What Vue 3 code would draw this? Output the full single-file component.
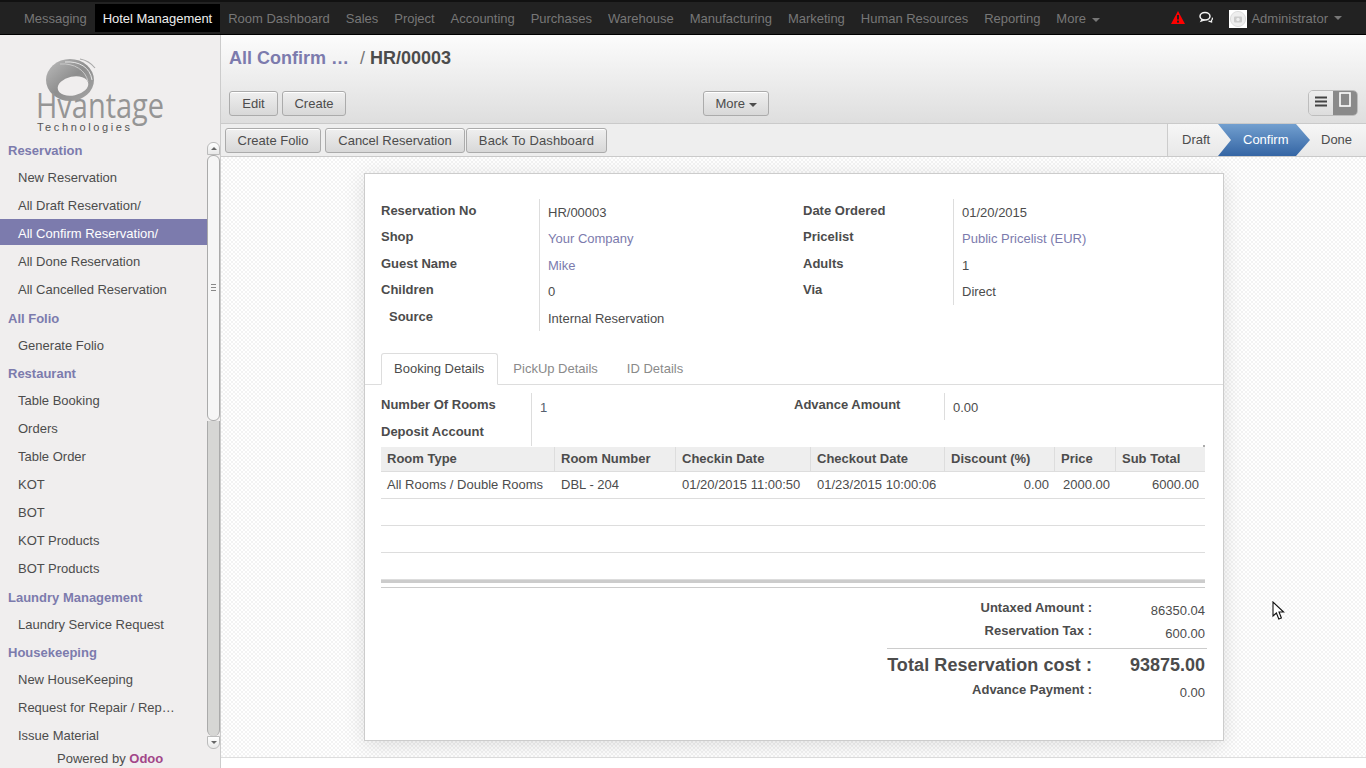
<script setup>
const navItems = ['Room Dashboard','Sales','Project','Accounting','Purchases','Warehouse','Manufacturing','Marketing','Human Resources','Reporting']
const menu = [
  { title: 'Reservation', items: ['New Reservation','All Draft Reservation/','All Confirm Reservation/','All Done Reservation','All Cancelled Reservation'] },
  { title: 'All Folio', items: ['Generate Folio'] },
  { title: 'Restaurant', items: ['Table Booking','Orders','Table Order','KOT','BOT','KOT Products','BOT Products'] },
  { title: 'Laundry Management', items: ['Laundry Service Request'] },
  { title: 'Housekeeping', items: ['New HouseKeeping','Request for Repair / Rep…','Issue Material'] },
]
const active = 'All Confirm Reservation/'
const leftFields = [
  { label: 'Reservation No', value: 'HR/00003' },
  { label: 'Shop', value: 'Your Company', link: true },
  { label: 'Guest Name', value: 'Mike', link: true },
  { label: 'Children', value: '0' },
  { label: 'Source', value: 'Internal Reservation', indent: true },
]
const rightFields = [
  { label: 'Date Ordered', value: '01/20/2015' },
  { label: 'Pricelist', value: 'Public Pricelist (EUR)', link: true },
  { label: 'Adults', value: '1' },
  { label: 'Via', value: 'Direct' },
]
const totals = [
  { label: 'Untaxed Amount :', value: '86350.04' },
  { label: 'Reservation Tax :', value: '600.00' },
]
const columns = [
  { name: 'Room Type', width: 174 },
  { name: 'Room Number', width: 121 },
  { name: 'Checkin Date', width: 135 },
  { name: 'Checkout Date', width: 134 },
  { name: 'Discount (%)', width: 110 },
  { name: 'Price', width: 61 },
  { name: 'Sub Total', width: 89 },
]
</script>

<template>
  <div class="app">
    <nav class="topbar">
      <ul class="navlist">
        <li class="navitem">Messaging</li>
        <li class="navitem current">Hotel Management</li>
        <li v-for="n in navItems" :key="n" class="navitem">{{ n }}</li>
        <li class="navitem">More <span class="caret nav-caret"></span></li>
      </ul>
      <div class="nav-right">
        <svg class="alert" width="14" height="13" viewBox="0 0 14 13">
          <path d="M7 0 L14 13 L0 13 Z" fill="#f00" />
          <rect x="6" y="4" width="2" height="4.5" fill="#222" />
          <rect x="6" y="9.6" width="2" height="2" fill="#222" />
        </svg>
        <svg class="chat" width="14" height="13" viewBox="0 0 14 13" fill="none">
          <path d="M9.5 10.2 C11 10.4 12.6 11 13 11.4 C12.6 10.6 12.4 10 12.5 9.4 C13.4 8.6 13.6 7.6 13.2 6.6" stroke="#eee" stroke-width="1.2" />
          <ellipse cx="6" cy="5.2" rx="5" ry="3.8" stroke="#f4f4f4" stroke-width="1.5" />
          <path d="M3.2 8 L2 10.2 L5.6 9" stroke="#f4f4f4" stroke-width="1.2" />
        </svg>
        <span class="avatar">
          <svg width="18" height="18" viewBox="0 0 18 18">
            <circle cx="9" cy="9" r="7.6" fill="#eee" stroke="#ddd" />
            <rect x="5" y="6.5" width="8" height="6" rx="1" fill="#ccc" />
            <circle cx="9" cy="9.5" r="1.7" fill="#eee" />
          </svg>
        </span>
        <span class="admin">Administrator</span>
        <span class="caret nav-caret admin-caret"></span>
      </div>
    </nav>

    <div class="body">
      <aside class="sidebar">
        <div class="logo">
          <svg width="130" height="76" viewBox="0 0 130 76">
            <defs>
              <linearGradient id="swirl" x1="0" y1="0" x2="1" y2="1">
                <stop offset="0" stop-color="#bdbdbd" />
                <stop offset="0.5" stop-color="#8e8e8e" />
                <stop offset="1" stop-color="#a5a5a5" />
              </linearGradient>
            </defs>
            <ellipse cx="34" cy="22" rx="24" ry="21" fill="url(#swirl)" />
            <ellipse cx="37" cy="28" rx="15.5" ry="9.5" transform="rotate(-12 37 28)" fill="#f0eeee" />
            <path d="M29 4 C43 3 54 9 56 22" fill="none" stroke="#e6e6e6" stroke-width="1" />
            <path d="M24 6 C38 5 50 12 52 24" fill="none" stroke="#c9c9c9" stroke-width="1" />
            <path d="M44 1 C50 2 55 5 59 10" fill="none" stroke="#a8a8a8" stroke-width="1.2" />
            <text class="logo-name" x="0" y="60" textLength="128" lengthAdjust="spacingAndGlyphs">Hvantage</text>
            <text class="logo-sub" x="1" y="73" textLength="93">Technologies</text>
          </svg>
        </div>
        <div class="menu-wrap">
          <div class="menu">
            <template v-for="g in menu" :key="g.title">
              <div class="menu-head">{{ g.title }}</div>
              <div v-for="i in g.items" :key="i" class="menu-item" :class="{ selected: i === active }">{{ i }}</div>
            </template>
          </div>
          <div class="scrollbar">
            <div class="sb-btn sb-top"><span class="sb-up"></span></div>
            <div class="sb-thumb"><span class="sb-grip"></span></div>
            <div class="sb-track"></div>
            <div class="sb-btn sb-bottom"><span class="sb-down"></span></div>
          </div>
        </div>
        <div class="powered">Powered by <b>Odoo</b></div>
      </aside>

      <main class="main">
        <header class="head">
          <h2 class="crumbs"><a>All Confirm …</a><span class="sep"> / </span><span class="cur">HR/00003</span></h2>
          <div class="tools">
            <div class="tool-left">
              <button class="btn w-edit">Edit</button>
              <button class="btn w-create">Create</button>
            </div>
            <div class="tool-mid">
              <button class="btn w-more">More <span class="caret dark"></span></button>
            </div>
            <div class="switch">
              <span class="sw sw-list">
                <svg width="12" height="11" viewBox="0 0 12 11"><rect y="0.5" width="12" height="2" fill="#444" /><rect y="4.5" width="12" height="2" fill="#444" /><rect y="8.5" width="12" height="2" fill="#444" /></svg>
              </span>
              <span class="sw sw-form">
                <svg width="12" height="15" viewBox="0 0 12 15"><rect x="1" y="1" width="10" height="13" fill="none" stroke="#fff" stroke-width="1.6" /></svg>
              </span>
            </div>
          </div>
        </header>

        <div class="statusbar">
          <div class="actions">
            <button class="btn w-folio">Create Folio</button>
            <button class="btn w-cancel">Cancel Reservation</button>
            <button class="btn w-back">Back To Dashboard</button>
          </div>
          <div class="steps">
            <span class="step draft">Draft</span>
            <span class="step on">Confirm</span>
            <span class="step done">Done</span>
          </div>
        </div>

        <div class="content">
          <section class="sheet">
            <div class="fields">
              <div class="fcol lcol">
                <div v-for="f in leftFields" :key="f.label" class="frow">
                  <label class="flabel" :class="{ indent: f.indent }">{{ f.label }}</label>
                  <span class="fval" :class="{ link: f.link }">{{ f.value }}</span>
                </div>
              </div>
              <div class="fcol rcol">
                <div v-for="f in rightFields" :key="f.label" class="frow">
                  <label class="flabel">{{ f.label }}</label>
                  <span class="fval" :class="{ link: f.link }">{{ f.value }}</span>
                </div>
              </div>
            </div>

            <ul class="tabs">
              <li class="tab active">Booking Details</li>
              <li class="tab">PickUp Details</li>
              <li class="tab">ID Details</li>
            </ul>

            <div class="pane">
              <div class="pcol pleft">
                <div class="prow"><label class="flabel">Number Of Rooms</label><span class="fval link-blue">1</span></div>
                <div class="prow"><label class="flabel">Deposit Account</label><span class="fval"></span></div>
              </div>
              <div class="pcol pright">
                <div class="prow"><label class="flabel">Advance Amount</label><span class="fval">0.00</span></div>
              </div>
            </div>

            <div class="table-box">
              <span class="tick"></span>
              <table class="grid">
                <colgroup><col v-for="c in columns" :key="c.name" :style="{ width: c.width + 'px' }" /></colgroup>
                <thead>
                  <tr><th v-for="c in columns" :key="c.name">{{ c.name }}</th></tr>
                </thead>
                <tbody>
                  <tr class="filled">
                    <td>All Rooms / Double Rooms</td>
                    <td>DBL - 204</td>
                    <td>01/20/2015 11:00:50</td>
                    <td>01/23/2015 10:00:06</td>
                    <td class="num">0.00</td>
                    <td class="num">2000.00</td>
                    <td class="num">6000.00</td>
                  </tr>
                  <tr v-for="n in 3" :key="n" class="empty"><td colspan="7"></td></tr>
                </tbody>
                <tfoot><tr><td colspan="7"></td></tr></tfoot>
              </table>
            </div>

            <div class="totals">
              <div v-for="t in totals" :key="t.label" class="trow">
                <span class="tlabel">{{ t.label }}</span><span class="tval">{{ t.value }}</span>
              </div>
              <div class="trow big">
                <span class="tlabel">Total Reservation cost :</span><span class="tval">93875.00</span>
              </div>
              <div class="trow adv">
                <span class="tlabel">Advance Payment :</span><span class="tval">0.00</span>
              </div>
            </div>
          </section>
        </div>
        <div class="tail"></div>
      </main>
    </div>

    <svg class="cursor" width="14" height="20" viewBox="0 0 14 20">
      <path d="M1 1 L1 15 L4.4 12 L6.8 18 L9.4 17 L7 11 L11.6 11 Z" fill="#fff" stroke="#111" stroke-width="1.1" />
    </svg>
  </div>
</template>

<style>
html, body { margin: 0; padding: 0; overflow: hidden; background: #fff; }
</style>

<style scoped>
* { box-sizing: border-box; }
.app {
  position: relative;
  width: 1366px;
  height: 768px;
  overflow: hidden;
  display: flex;
  flex-direction: column;
  font-family: "Liberation Sans", Arial, sans-serif;
  font-size: 13px;
  color: #4c4c4c;
}
.topbar {
  height: 35px;
  flex: none;
  display: flex;
  justify-content: space-between;
  background: #222;
  border-top: 2px solid #111;
  border-bottom: 1px solid #000;
  padding-top: 2px;
}
.navlist {
  display: flex;
  list-style: none;
  margin: 0;
  padding: 0 0 0 16px;
}
.navitem {
  height: 28px;
  line-height: 29px;
  padding: 0 8px;
  color: #777;
  white-space: nowrap;
  letter-spacing: -0.02px;
}
.navitem.current { background: #000; color: #eee; }
.caret {
  display: inline-block;
  width: 0;
  height: 0;
  vertical-align: middle;
  border-left: 4px solid transparent;
  border-right: 4px solid transparent;
  border-top: 4px solid #777;
}
.nav-caret { margin-left: 2px; }
.caret.dark { border-top-color: #4c4c4c; margin-left: 0; }
.nav-right {
  display: flex;
  align-items: center;
  height: 28px;
  margin-right: 24px;
}
.alert { margin-right: 14px; margin-top: -1px; }
.chat { margin-right: 16px; margin-top: -1px; }
.avatar { width: 18px; height: 18px; background: #fff; margin-right: 4px; display: flex; margin-top: 1px; }
.admin { color: #777; }
.admin-caret { margin-left: 6px; }
.body { flex: 1; display: flex; min-height: 0; }

.sidebar {
  position: relative;
  width: 221px;
  flex: none;
  display: flex;
  flex-direction: column;
  background: #f0eeee;
  border-right: 1px solid #ccc;
}
.logo { height: 98.5px; padding: 23px 0 0 36px; flex: none; }
.logo svg { display: block; overflow: visible; }
.logo-name { font-family: "Open Sans", sans-serif; font-weight: 400; font-size: 34px; fill: #959595; }
.logo-sub { font-family: "Liberation Sans", sans-serif; font-size: 11px; fill: #555; }
.menu-wrap { flex: 1; min-height: 0; display: flex; overflow: hidden; }
.menu { width: 207px; flex: none; }
.menu-head {
  height: 25px;
  line-height: 26px;
  margin-top: 4.5px;
  padding-left: 8px;
  font-weight: 700;
  color: #7c7bad;
}
.menu-item {
  height: 26px;
  line-height: 29px;
  margin-bottom: 2px;
  padding-left: 18px;
  color: #4c4c4c;
  white-space: nowrap;
}
.menu-item.selected { background: #7c7bad; color: #fff; }
.scrollbar { width: 13px; flex: none; display: flex; flex-direction: column; padding-top: 8px; padding-bottom: 19px; background: #f0eeee; }
.sb-btn {
  height: 13px;
  flex: none;
  background: linear-gradient(#fff, #e8e8e8);
  border: 1px solid #bbb;
  display: flex;
  align-items: center;
  justify-content: center;
}
.sb-top { border-radius: 6px 6px 0 0; }
.sb-bottom { border-radius: 0 0 6px 6px; }
.sb-up { width: 0; height: 0; border-left: 3px solid transparent; border-right: 3px solid transparent; border-bottom: 3px solid #666; }
.sb-down { width: 0; height: 0; border-left: 3px solid transparent; border-right: 3px solid transparent; border-top: 3px solid #666; }
.sb-thumb {
  height: 266px;
  flex: none;
  background: #f6f6f6;
  border: 1px solid #aaa;
  border-radius: 6px;
  display: flex;
  align-items: center;
  justify-content: center;
}
.sb-grip { width: 5px; height: 8px; background: repeating-linear-gradient(#888 0 1px, transparent 1px 3px); }
.sb-track { flex: 1; background: #d6d6d4; border-left: 1px solid #aaa; border-right: 1px solid #aaa; border-radius: 0 0 6px 6px; }
.powered {
  position: absolute;
  left: 57px;
  bottom: 2px;
  line-height: 15px;
  color: #4c4c4c;
}
.powered b { color: #a24689; }

.main { flex: 1; min-width: 0; display: flex; flex-direction: column; }
.head {
  height: 89px;
  flex: none;
  background: linear-gradient(#fcfcfc, #dedede);
  padding: 0 8px;
  border-bottom: 1px solid #cacaca;
}
.crumbs { margin: 0; height: 56px; padding-top: 11px; line-height: 24px; font-size: 18px; font-weight: 700; color: #4c4c4c; }
.crumbs a { color: #7c7bad; }
.crumbs .sep { font-weight: 400; font-size: 18px; color: #777; margin-left: 6px; }
.tools { display: grid; grid-template-columns: 474px 1fr auto; align-items: start; }
.tool-left { display: flex; gap: 4px; }
.btn {
  height: 25px;
  padding: 0;
  font: inherit;
  font-size: 13px;
  color: #4c4c4c;
  background: linear-gradient(#efefef, #d8d8d8);
  border: 1px solid #ababab;
  border-radius: 3px;
  box-shadow: inset 0 1px 0 #fff;
  white-space: nowrap;
}
.w-edit { width: 49px; }
.w-create { width: 64px; }
.w-more { width: 66px; }
.w-folio { width: 96px; }
.w-cancel { width: 140px; }
.w-back { width: 141px; margin-left: -3px; letter-spacing: 0.12px; }
.switch { display: flex; width: 50px; height: 26px; margin-top: -1px; border: 1px solid #bdbdbd; border-radius: 5px; overflow: hidden; }
.sw { flex: 1; display: flex; justify-content: center; align-items: flex-start; }
.sw-list { background: linear-gradient(#eee, #ddd); padding-top: 5px; }
.sw-form { background: #8a8a8a; padding-top: 1px; }

.statusbar {
  height: 33px;
  flex: none;
  display: flex;
  justify-content: space-between;
  background: #eeeeee;
  border-bottom: 1px solid #cacaca;
  padding-left: 4px;
}
.actions { display: flex; gap: 4px; padding-top: 4px; }
.steps { display: flex; height: 32px; border-left: 1px solid #ccc; background: linear-gradient(#f6f6f6, #e8e8e8); }
.step { line-height: 32px; display: block; position: relative; }
.step.draft { width: 50px; padding-left: 14px; }
.step.on {
  width: 92px;
  padding-left: 25px;
  color: #fff;
  background: linear-gradient(#729fcf, #3465a4);
  clip-path: polygon(0 0, 78px 0, 92px 50%, 78px 100%, 0 100%, 13px 50%);
}
.step.done { width: 70px; margin-left: -14px; padding-left: 25px; }

.content {
  flex: 1;
  min-height: 0;
  padding: 16px 0 0 143px;
  background-color: #fff;
  background-image: conic-gradient(#f3f3f3 25%, #fff 0 50%, #f3f3f3 0 75%, #fff 0);
  background-size: 4px 4px;
  border-bottom: 1px solid #ddd;
}
.tail { height: 10px; flex: none; background: #fff; }
.sheet {
  width: 860px;
  height: 568px;
  background: #fff;
  border: 1px solid #ccc;
  box-shadow: 0 4px 20px rgba(0,0,0,.12);
  padding: 24.75px 18px 0 16px;
}
.fields { display: flex; height: 154.25px; }
.fcol { display: flex; flex-direction: column; }
.lcol { width: 422px; }
.rcol { flex: 1; }
.frow { display: flex; height: 26.5px; }
.flabel {
  font-weight: 700;
  color: #4c4c4c;
  line-height: 24px;
  display: block;
  flex: none;
  white-space: nowrap;
}
.lcol .flabel { width: 158px; }
.rcol .flabel { width: 150px; }
.flabel.indent { padding-left: 8px; }
.fval {
  flex: 1;
  border-left: 1px solid #ddd;
  padding-left: 8px;
  line-height: 28px;
  color: #4c4c4c;
}
.fval.link { color: #7c7bad; }
.fval.link-blue { color: #55606e; }
.tabs {
  display: flex;
  list-style: none;
  margin: 0 -18px 0 -16px;
  padding: 0 0 0 16px;
  height: 32px;
  border-bottom: 1px solid #ddd;
}
.tab {
  height: 32px;
  line-height: 30px;
  padding: 0 12px;
  margin-right: 3px;
  color: #8a8a8a;
  border: 1px solid transparent;
}
.tab.active {
  padding-right: 13px;
  margin-right: 2px;
  color: #4c4c4c;
  background: #fff;
  border-color: #ddd #ddd #fff;
  border-radius: 3px 3px 0 0;
}
.pane { display: flex; height: 62px; padding-top: 8px; }
.pcol { display: flex; flex-direction: column; }
.pleft { width: 413px; }
.pright { flex: 1; }
.prow { display: flex; height: 26.5px; }
.prow .fval { line-height: 30px; }
.pleft .flabel { width: 150px; }
.pright .flabel { width: 150px; }
.table-box { position: relative; }
.tick { position: absolute; right: 0; top: -2px; width: 2px; height: 2px; background: #aaa; }
.grid { width: 824px; border-collapse: separate; border-spacing: 0; table-layout: fixed; }
.grid th {
  height: 25px;
  padding: 0 6px 1px;
  text-align: left;
  font-weight: 700;
  color: #4c4c4c;
  background: #eeeeee;
  border-right: 1px solid #ddd;
  border-bottom: 1px solid #ddd;
  white-space: nowrap;
}
.grid th:last-child { border-right: 0; }
.grid td {
  height: 27px;
  padding: 0 6px;
  border-bottom: 1px solid #ddd;
  white-space: nowrap;
}
.grid .filled td { padding-bottom: 2px; }
.grid td.num { text-align: right; }
.grid tfoot td { height: 8px; padding: 0; border-top: 3px solid #ccc; border-bottom: 1px solid #ccc; }
.totals { width: 826px; padding-top: 8px; display: flex; flex-direction: column; align-items: flex-end; }
.trow { display: flex; width: 320px; height: 23px; }
.tlabel { width: 205px; text-align: right; font-weight: 700; line-height: 23px; white-space: nowrap; }
.tval { width: 113px; text-align: right; line-height: 29px; }
.trow.big {
  height: 36px;
  margin-top: 6px;
  border-top: 1px solid #ccc;
  font-size: 18px;
  font-weight: 700;
}
.trow.big .tlabel, .trow.big .tval { line-height: 32px; }
.trow.big .tlabel { letter-spacing: 0.09px; }
.trow.adv { height: 23px; margin-top: -6px; }
.trow.adv .tval { line-height: 30px; }
.cursor { position: absolute; left: 1272px; top: 601px; }
</style>
